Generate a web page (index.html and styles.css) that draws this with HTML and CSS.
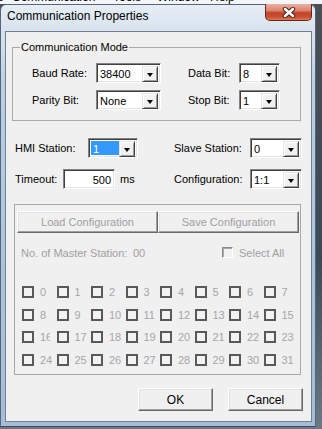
FILE: index.html
```html
<!DOCTYPE html>
<html lang="en">
<head>
    <meta charset="UTF-8">
    <meta name="viewport" content="width=device-width, initial-scale=1.0">
    <title>Communication Properties</title>
    <link rel="stylesheet" href="styles.css">
</head>
<body>

    <!-- menu of the app behind the dialog, only the bottom of it shows -->
    <div class="appmenu">
        <div class="appmenu-text">
            <span class="m-e">e</span><span class="m-comm">Communication</span><span class="m-tools">Tools</span><span class="m-window">Window</span><span>Help</span>
        </div>
    </div>

    <div class="window">
        <div class="titlebar">
            <span class="title">Communication Properties</span>
            <span class="close">
                <svg width="14" height="11" viewBox="0 0 14 11">
                    <path d="M3 2 L11 9 M11 2 L3 9" stroke="#4a1a12" stroke-width="4.4" stroke-linecap="round"/>
                    <path d="M3 2 L11 9 M11 2 L3 9" stroke="#ffffff" stroke-width="2.6" stroke-linecap="round"/>
                </svg>
            </span>
        </div>

        <div class="client">
            <fieldset class="group mode">
                <legend>Communication Mode</legend>
                <div class="mode-grid">
                    <label>Baud Rate:</label>
                    <div class="combo w65"><span class="value">38400</span><span class="arrow"></span></div>
                    <label>Data Bit:</label>
                    <div class="combo w41"><span class="value">8</span><span class="arrow"></span></div>
                    <label>Parity Bit:</label>
                    <div class="combo w65"><span class="value">None</span><span class="arrow"></span></div>
                    <label>Stop Bit:</label>
                    <div class="combo w41"><span class="value">1</span><span class="arrow"></span></div>
                </div>
            </fieldset>

            <div class="station-row first">
                <div class="left">
                    <label class="l-hmi">HMI Station:</label>
                    <div class="combo w50"><span class="value"><span class="selected">1</span></span><span class="arrow"></span></div>
                </div>
                <div class="right">
                    <label>Slave Station:</label>
                    <div class="combo w52"><span class="value">0</span><span class="arrow"></span></div>
                </div>
            </div>

            <div class="station-row second">
                <div class="left">
                    <label class="l-timeout">Timeout:</label>
                    <div class="edit">500</div>
                    <span class="unit">ms</span>
                </div>
                <div class="right">
                    <label>Configuration:</label>
                    <div class="combo w52"><span class="value">1:1</span><span class="arrow"></span></div>
                </div>
            </div>

            <fieldset class="group master">
                <div class="cfg-buttons">
                    <button disabled>Load Configuration</button>
                    <button disabled>Save Configuration</button>
                </div>
                <div class="master-row">
                    <span class="master-label">No. of Master Station:</span>
                    <span class="master-count">00</span>
                    <span class="select-all"><span class="check flat"></span>Select All</span>
                </div>
                <div class="stations">
                    <span class="station"><span class="check"></span><span class="num">0</span></span>
                    <span class="station"><span class="check"></span><span class="num">1</span></span>
                    <span class="station"><span class="check"></span><span class="num">2</span></span>
                    <span class="station"><span class="check"></span><span class="num">3</span></span>
                    <span class="station"><span class="check"></span><span class="num">4</span></span>
                    <span class="station"><span class="check"></span><span class="num">5</span></span>
                    <span class="station"><span class="check"></span><span class="num">6</span></span>
                    <span class="station"><span class="check"></span><span class="num">7</span></span>
                    <span class="station"><span class="check"></span><span class="num">8</span></span>
                    <span class="station"><span class="check"></span><span class="num">9</span></span>
                    <span class="station"><span class="check"></span><span class="num">10</span></span>
                    <span class="station"><span class="check"></span><span class="num">11</span></span>
                    <span class="station"><span class="check"></span><span class="num">12</span></span>
                    <span class="station"><span class="check"></span><span class="num">13</span></span>
                    <span class="station"><span class="check"></span><span class="num">14</span></span>
                    <span class="station"><span class="check"></span><span class="num">15</span></span>
                    <span class="station"><span class="check"></span><span class="num clip">16</span></span>
                    <span class="station"><span class="check"></span><span class="num">17</span></span>
                    <span class="station"><span class="check"></span><span class="num">18</span></span>
                    <span class="station"><span class="check"></span><span class="num">19</span></span>
                    <span class="station"><span class="check"></span><span class="num">20</span></span>
                    <span class="station"><span class="check"></span><span class="num">21</span></span>
                    <span class="station"><span class="check"></span><span class="num">22</span></span>
                    <span class="station"><span class="check"></span><span class="num">23</span></span>
                    <span class="station"><span class="check"></span><span class="num">24</span></span>
                    <span class="station"><span class="check"></span><span class="num">25</span></span>
                    <span class="station"><span class="check"></span><span class="num">26</span></span>
                    <span class="station"><span class="check"></span><span class="num">27</span></span>
                    <span class="station"><span class="check"></span><span class="num">28</span></span>
                    <span class="station"><span class="check"></span><span class="num">29</span></span>
                    <span class="station"><span class="check"></span><span class="num">30</span></span>
                    <span class="station"><span class="check"></span><span class="num">31</span></span>
                </div>
            </fieldset>

            <div class="dialog-buttons">
                <button>OK</button>
                <button>Cancel</button>
            </div>
        </div>
    </div>

</body>
</html>
```

FILE: styles.css
```css
body {
    margin: 0;
    width: 322px;
    height: 429px;
    overflow: hidden;
    background: linear-gradient(to bottom, #4b4f55 0%, #3c4a58 60%, #6c7885 100%);
    font-family: "Liberation Sans", Arial, sans-serif;
    font-size: 11px;
    color: #000;
}

/* strip of the main app menu peeking above the dialog */
.appmenu {
    height: 4px;
    overflow: hidden;
    background: #f3f5f8;
}

.appmenu-text {
    margin-top: -9px;
    margin-left: -3px;
    font-size: 12px;
    line-height: 13px;
    white-space: nowrap;
}

.appmenu-text span {
    display: inline-block;
}

.m-e { width: 15px; }
.m-comm { width: 101px; }
.m-tools { width: 44px; }
.m-window { width: 53px; }

/* dialog frame */
.window {
    width: 316px;
    box-sizing: border-box;
    border: 1px solid #55667a;
    border-bottom-color: #3d4a58;
    border-radius: 6px 6px 0 0;
    padding: 0 3px 4px 4px;
    background: linear-gradient(to bottom, #e6edf5 0px, #d8e3ef 26px, #bccfe3 80px, #aec4dc 250px, #a6bdd7 100%);
}

.titlebar {
    height: 26px;
    display: flex;
    align-items: flex-start;
}

.title {
    padding-left: 2px;
    line-height: 22px;
    font-size: 12px;
    color: #000;
}

.close {
    margin-left: auto;
    margin-top: -1px;
    width: 47px;
    height: 17px;
    box-sizing: border-box;
    border: 1px solid #6e2418;
    border-top: none;
    border-radius: 0 0 5px 5px;
    background: linear-gradient(to bottom, #eab0a2 0%, #dc8670 40%, #c2432a 55%, #c9502f 80%, #dd7a5c 100%);
    display: flex;
    align-items: center;
    justify-content: center;
}

.client {
    width: 307px;
    height: 391px;
    box-sizing: border-box;
    border: 1px solid #6f8092;
    background: #f0f0f0;
    padding-top: 9px;
}

/* group boxes */
.group {
    margin: 0;
    min-width: 0;
    box-sizing: border-box;
    border: 1px solid #a8a8a8;
}

.group.mode {
    margin-left: 6px;
    width: 289px;
    padding: 9px 0 10px 0;
}

.group legend {
    margin-left: 7px;
    padding: 0 1px;
    line-height: 13px;
}

.mode-grid {
    display: grid;
    grid-template-columns: 64px 92px 51px 41px;
    row-gap: 7px;
    align-items: center;
    padding-left: 19px;
}

/* combo boxes and edits */
.combo, .edit {
    box-sizing: border-box;
    height: 20px;
    background: #fff;
    border: 1px solid;
    border-color: #828282 #ffffff #ffffff #828282;
    box-shadow: inset 1px 1px 0 #404040, inset -1px -1px 0 #e3e3e3;
    padding: 2px;
}

.combo {
    display: flex;
}

.combo .value {
    flex: 1;
    line-height: 16px;
    padding-left: 1px;
    white-space: nowrap;
    overflow: hidden;
}

.combo .value .selected {
    display: block;
    margin-left: -1px;
    padding-left: 2px;
    background: #3399ff;
    color: #fff;
}

.combo .arrow {
    width: 16px;
    height: 16px;
    box-sizing: border-box;
    background: #f0f0f0;
    border: 1px solid;
    border-color: #e3e3e3 #404040 #404040 #e3e3e3;
    box-shadow: inset 1px 1px 0 #fff, inset -1px -1px 0 #a0a0a0;
    display: flex;
    align-items: center;
    justify-content: center;
}

.combo .arrow::after {
    content: '';
    border-style: solid;
    border-width: 4px 3.5px 0 3.5px;
    border-color: #000 transparent transparent transparent;
    margin-top: 1px;
}

.w41 { width: 41px; }
.w50 { width: 50px; }
.w52 { width: 52px; }
.w65 { width: 65px; }

.edit {
    width: 52px;
    text-align: right;
    line-height: 16px;
    padding-right: 3px;
}

/* station rows */
.station-row {
    display: flex;
    align-items: center;
    height: 20px;
    padding-left: 9px;
}

.station-row.first { margin-top: 17px; }
.station-row.second { margin-top: 11px; }

.station-row .left {
    width: 159px;
    display: flex;
    align-items: center;
}

.station-row .right {
    display: flex;
    align-items: center;
}

.station-row .right label { width: 76px; }
.l-hmi { width: 73px; }
.l-timeout { width: 48px; }

.unit {
    margin-left: 5px;
}

/* disabled master station group */
.group.master {
    margin: 15px 0 0 8px;
    width: 287px;
    padding: 6px 1px 3px 2px;
    color: #a0a0a0;
}

.cfg-buttons {
    display: flex;
}

button {
    font-family: "Liberation Sans", Arial, sans-serif;
    font-size: 11px;
    color: #000;
    background: #f0f0f0;
    border: 1px solid;
    border-color: #ffffff #696969 #696969 #ffffff;
    box-shadow: inset -1px -1px 0 #a0a0a0, inset 1px 1px 0 #e3e3e3;
    padding: 0;
}

button:disabled {
    color: #a0a0a0;
}

.cfg-buttons button {
    width: 141px;
    height: 22px;
}

.master-row {
    margin-top: 13px;
    height: 13px;
    display: flex;
    align-items: center;
    padding-left: 4px;
}

.master-label { width: 112px; }
.master-count { width: 89px; }

.select-all {
    display: flex;
    align-items: center;
}

.check {
    width: 12px;
    height: 12px;
    box-sizing: border-box;
    border: 2px solid #595959;
    background: #f2f2f2;
    flex-shrink: 0;
}

.check.flat {
    width: 11px;
    height: 11px;
    border: 1px solid;
    border-color: #8a8a8a #ffffff #ffffff #8a8a8a;
    box-shadow: inset 1px 1px 0 #a8a8a8;
    margin-right: 6px;
}

.stations {
    margin-top: 22px;
    padding-left: 5px;
    display: grid;
    grid-template-columns: repeat(8, 34.5px);
    grid-auto-rows: 22.5px;
    align-items: center;
}

.station {
    display: flex;
    align-items: center;
}

.station .num {
    margin-left: 6px;
    color: #a6a6a6;
    white-space: nowrap;
}

.station .num.clip {
    width: 10px;
    overflow: hidden;
}

/* OK / Cancel */
.dialog-buttons {
    margin-top: 13px;
    display: flex;
    justify-content: flex-end;
    gap: 15px;
    padding-right: 8px;
}

.dialog-buttons button {
    width: 75px;
    height: 23px;
    font-size: 12px;
}
```
